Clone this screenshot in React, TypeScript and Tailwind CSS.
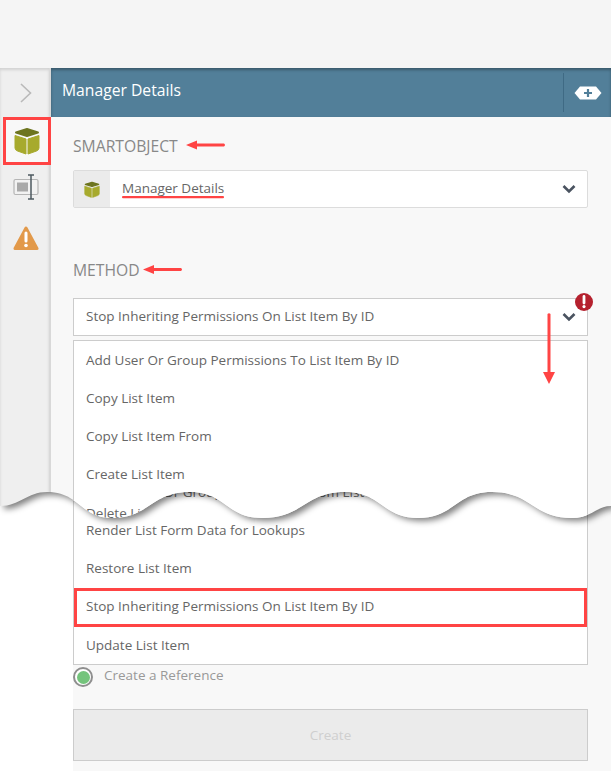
const upperItems = ['Add User Or Group Permissions To List Item By ID', 'Copy List Item', 'Copy List Item From', 'Create List Item', 'Delete List Item'];
const lowerItems = [
  'Delete User Or Group Permissions From List Item By ID',
  'Render List Form Data for Lookups',
  'Restore List Item',
  'Stop Inheriting Permissions On List Item By ID',
  'Update List Item',
];

const waveDown =
  'M0 506C20 506 27 492 47 492C80 492 80 518 112 518C150 518 150 492 190 492C226 492 226 518 262 518C304 518 304 492 345 492C382 492 382 518 418 518C455 518 455 492 492 492C532 492 532 518 572 518C592 518 596 506 611 506';

function Cube({ className }: { className?: string }) {
  return (
    <svg viewBox="0 0 26 28" className={className}>
      <path d="M13 2 L24 5.5 L13 9 L2 5.5 Z" fill="#6d751f" stroke="#6d751f" strokeWidth="2" strokeLinejoin="round" />
      <path d="M1 8.5 L12 12 V27 L3.5 24 Q1 23 1 21 Z" fill="#a7aa2d" stroke="#a7aa2d" strokeLinejoin="round" />
      <path d="M25 8.5 L14 12 V27 L22.5 24 Q25 23 25 21 Z" fill="#a7aa2d" stroke="#a7aa2d" strokeLinejoin="round" />
    </svg>
  );
}

function Chevron({ className }: { className?: string }) {
  return (
    <svg viewBox="0 0 14 10" className={className}>
      <path d="M1.5 2 L7 7.5 L12.5 2" fill="none" stroke="#4a5360" strokeWidth="2.6" />
    </svg>
  );
}

function Row({ label }: { label: string }) {
  return <div className="flex h-[38.25px] items-center pb-[1px] pl-3 text-[13.5px] text-[#666]">{label}</div>;
}

function Sidebar() {
  return (
    <div className="flex w-[51px] shrink-0 flex-col items-center border-r-2 border-[#d9d9d9] bg-[#efefef] shadow-[inset_0_2px_3px_rgba(0,0,0,0.12)]">
      <div className="flex h-[49px] w-full items-center justify-center pl-[3px]">
        <svg viewBox="0 0 12 20" className="h-5 w-3">
          <path d="M1 1 L10.5 10 L1 19" fill="none" stroke="#b9b9b9" strokeWidth="1.6" />
        </svg>
      </div>
      <div className="ml-[4px] flex h-[48px] w-[48px] items-center justify-center border-[3px] border-[#ff4444] bg-[#f8f8f8]">
        <Cube className="h-[28px] w-[26px]" />
      </div>
      <svg viewBox="0 0 26 26" className="ml-[2px] mt-[9px] h-[26px] w-[26px]">
        <rect x="1" y="5.5" width="24" height="15" rx="1.5" fill="#f2f2f2" stroke="#b5b5b5" strokeWidth="1.2" />
        <rect x="4" y="8.5" width="11" height="9" fill="#a9a9a9" />
        <path d="M15 1 H21 M18 1 V25 M15 25 H21" fill="none" stroke="#4d5a60" strokeWidth="1.5" />
      </svg>
      <svg viewBox="0 0 26 26" className="ml-[2px] mt-[25px] h-[26px] w-[26px]">
        <path d="M13 3 L24 23.5 H2 Z" fill="#e2994a" stroke="#e2994a" strokeWidth="3" strokeLinejoin="round" />
        <path d="M13 8 V16" stroke="#fff" strokeWidth="3" strokeLinecap="round" />
        <circle cx="13" cy="20.5" r="1.8" fill="#fff" />
      </svg>
    </div>
  );
}

function Annotations() {
  return (
    <svg viewBox="0 0 611 771" className="pointer-events-none absolute inset-0 h-[771px] w-[611px]">
      <g fill="#ff4444">
        <path d="M186 145 L197 140.5 V143.5 H224 Q226 145 224 146.5 H197 V149.5 Z" />
        <path d="M143 269.5 L154 265 V268 H181 Q183 269.5 181 271 H154 V274 Z" />
        <path d="M547.5 314 Q549 312.5 550.5 314 V372 H555 L549 384 L543 372 H547.5 Z" />
        <rect x="122" y="196" width="102" height="2.2" rx="1" />
      </g>
      <rect x="75.5" y="589.5" width="510" height="36" fill="none" stroke="#ff4444" strokeWidth="3" />
    </svg>
  );
}

export default function App() {
  return (
    <div className="relative h-[771px] w-[611px] overflow-hidden bg-white font-['Open_Sans',sans-serif]">
      {/* lower half of the torn picture */}
      <div className="h-[771px] pl-[73px]">
        <div className="flex h-full flex-col bg-[#f8f8f8] pr-[23px]">
          <div className="mt-[473px] border border-t-0 border-[#cccccc] bg-white">
            {lowerItems.map(item => (
              <Row key={item} label={item} />
            ))}
          </div>
          <div className="mt-[1px] flex h-[22px] items-center gap-[11px] text-[13.5px] text-[#999]">
            <span className="flex h-5 w-5 items-center justify-center rounded-full border-[2px] border-[#8f8f8f] bg-white">
              <span className="h-[13px] w-[13px] rounded-full bg-[#74c47c]" />
            </span>
            <span className="mb-[4px]">Create a Reference</span>
          </div>
          <div className="mt-[21px] flex h-[52px] items-center justify-center border border-[#cccccc] bg-[#ebebeb] text-[13.5px] text-[#cfcfcf]">
            Create
          </div>
        </div>
      </div>

      {/* tear shadow */}
      <svg viewBox="0 0 611 771" className="absolute inset-0 h-[771px] w-[611px]">
        <defs>
          <filter id="tear" x="-5%" y="-5%" width="110%" height="110%">
            <feGaussianBlur stdDeviation="3" />
          </filter>
        </defs>
        <path d={`${waveDown}V0H0Z`} fill="#000" fillOpacity="0.5" filter="url(#tear)" transform="translate(4 3)" />
      </svg>

      {/* upper half, cut along the wave */}
      <div className="absolute inset-0 flex flex-col [clip-path:path('M0_506C20_506_27_492_47_492C80_492_80_518_112_518C150_518_150_492_190_492C226_492_226_518_262_518C304_518_304_492_345_492C382_492_382_518_418_518C455_518_455_492_492_492C532_492_532_518_572_518C592_518_596_506_611_506V0H0Z')]">
        <div className="h-[68px] shrink-0 bg-[#f5f5f5]" />
        <div className="flex min-h-0 flex-1">
          <Sidebar />
          <div className="flex min-w-0 flex-1 flex-col bg-[#f8f8f8]">
            <div className="flex h-[49px] shrink-0 items-center justify-between bg-[#527f99] pl-[11px] shadow-[inset_0_2px_3px_rgba(0,0,0,0.3)]">
              <span className="mb-[4px] text-[15.7px] font-medium text-white">Manager Details</span>
              <div className="flex h-[39px] w-[48px] items-center justify-center border-l border-[#3f6a84]">
                <svg viewBox="0 0 28 14" className="ml-[1px] h-[14px] w-[28px]">
                  <path d="M6 .5 H22 L27.5 7 L22 13.5 H6 L.5 7 Z" fill="#fff" />
                  <path d="M14 3 V11 M10 7 H18" stroke="#527f99" strokeWidth="2.2" />
                </svg>
              </div>
            </div>
            <div className="flex flex-col pl-[22px] pr-[23px]">
              <div className="mt-[19px] text-[15.7px] leading-[20px] text-[#888]">SMARTOBJECT</div>
              <div className="mt-[14px] flex h-[38px] items-stretch rounded-[2px] border border-[#dcdcdc] bg-white">
                <div className="flex w-[36px] items-center justify-center bg-[#ebebeb]">
                  <Cube className="h-[17px] w-[16px]" />
                </div>
                <div className="flex flex-1 items-center justify-between pl-3 pr-[11px] text-[13.5px] text-[#666]">
                  <span className="mb-[1px]">Manager Details</span>
                  <Chevron className="h-[10px] w-[14px]" />
                </div>
              </div>
              <div className="mt-[52px] text-[15.7px] leading-[20px] text-[#888]">METHOD</div>
              <div className="relative mt-[18px] flex h-[38px] items-center justify-between border border-[#cccccc] bg-white pl-3 pr-[11px] text-[13.5px] text-[#666]">
                <span className="mb-[1px]">Stop Inheriting Permissions On List Item By ID</span>
                <Chevron className="h-[10px] w-[14px]" />
                <svg viewBox="0 0 18 18" className="absolute right-[-6px] top-[-6px] h-[18px] w-[18px]">
                  <circle cx="9" cy="9" r="9" fill="#b5212e" />
                  <path d="M9 3.5 V10" stroke="#fff" strokeWidth="2.8" strokeLinecap="round" />
                  <circle cx="9" cy="13.6" r="1.6" fill="#fff" />
                </svg>
              </div>
              <div className="mt-[4px] border border-b-0 border-[#cccccc] bg-white">
                {upperItems.map(item => (
                  <Row key={item} label={item} />
                ))}
              </div>
            </div>
          </div>
        </div>
      </div>

      <Annotations />
    </div>
  );
}
